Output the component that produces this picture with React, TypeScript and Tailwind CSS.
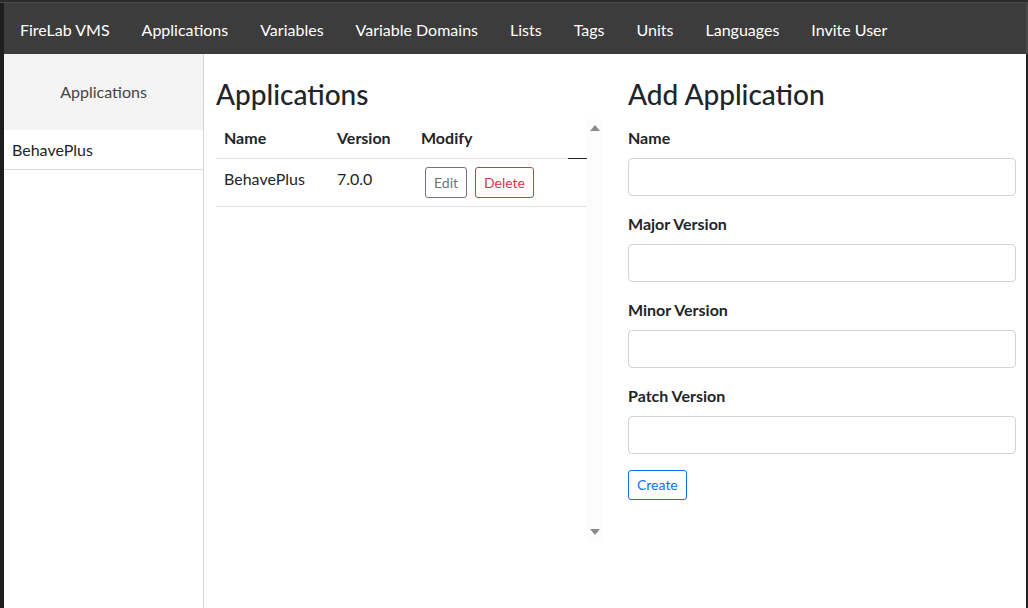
const navItems = ['Applications', 'Variables', 'Variable Domains', 'Lists', 'Tags', 'Units', 'Languages', 'Invite User']

const formFields = ['Name', 'Major Version', 'Minor Version', 'Patch Version']

function ScrollArrow({ up }: { up?: boolean }) {
  return (
    <svg width="10" height="6" viewBox="0 0 10 6" className="fill-[#8a8a8a]">
      {up ? <polygon points="5,0 10,6 0,6" /> : <polygon points="0,0 10,0 5,6" />}
    </svg>
  )
}

export default function App() {
  return (
    <div
      className="flex h-[608px] w-[1028px] flex-col overflow-hidden bg-[#1f1f1f] text-[#212529]"
      style={{ fontFamily: 'Lato, "Noto Sans", sans-serif' }}
    >
      {/* window chrome */}
      <div className="h-[3px] shrink-0 border-b border-[#4a4a4a] bg-[#2a2a2a]" />

      <div className="flex min-h-0 flex-1">
        <div className="w-[4px] shrink-0 bg-[#1e1e1e]" />

        <div className="flex min-w-0 flex-1 flex-col">
          {/* Navbar */}
          <nav className="flex h-[51px] shrink-0 items-center gap-[32px] bg-[#3c3c3c] pl-[16px] pt-[2px] text-[16px] text-white">
            <span>FireLab VMS</span>
            {navItems.map((item) => (
              <span key={item}>{item}</span>
            ))}
          </nav>

          <div className="flex min-h-0 flex-1">
            {/* Sidebar */}
            <aside className="flex w-[200px] shrink-0 flex-col border-r border-[#d6d6d6] bg-white">
              <div className="flex h-[76px] items-center justify-center bg-[#f4f4f4] text-[16px] font-normal text-[#444]">
                Applications
              </div>
              <div className="flex h-[40px] items-center border-b border-[#dcdcdc] pl-[8px] text-[16px]">
                BehavePlus
              </div>
            </aside>

            {/* Main */}
            <main className="flex min-w-0 flex-1 bg-white">
              {/* Applications list */}
              <section className="flex w-[411px] shrink-0 flex-col pl-[12px] pr-[12px] pt-[24px]">
                <h3 className="mb-[7px] text-[28px] font-medium leading-[1.2]">Applications</h3>
                <div className="flex h-[422px]">
                  <table className="h-fit w-[371px] border-collapse text-left text-[16px]">
                    <thead>
                      <tr className="h-[40px]">
                        <th className="w-[113px] border-b border-[#dee2e6] px-[8px] font-bold">Name</th>
                        <th className="w-[84px] border-b border-[#dee2e6] px-[8px] font-bold">Version</th>
                        <th className="w-[155px] border-b border-[#dee2e6] px-[8px] font-bold">Modify</th>
                        <th className="border-b border-[#212529]" />
                      </tr>
                    </thead>
                    <tbody>
                      <tr>
                        <td className="border-b border-[#dee2e6] px-[8px] pb-[8px] pt-[8px] align-top">BehavePlus</td>
                        <td className="border-b border-[#dee2e6] px-[8px] pb-[8px] pt-[8px] align-top">7.0.0</td>
                        <td className="border-b border-[#dee2e6] px-[8px] pb-[8px] pt-[8px] align-top" colSpan={2}>
                          <div className="flex gap-[8px] pl-[4px]">
                            <button className="h-[31px] rounded-[3px] border border-[#6c757d] px-[8px] text-[14px] text-[#6c757d]">
                              Edit
                            </button>
                            <button className="h-[31px] rounded-[3px] border border-[#dc3545] px-[8px] text-[14px] text-[#dc3545]">
                              Delete
                            </button>
                          </div>
                        </td>
                      </tr>
                    </tbody>
                  </table>
                  {/* scrollbar */}
                  <div className="flex w-[16px] flex-col items-center justify-between bg-[#fcfcfc] pb-[6px] pt-[6px]">
                    <ScrollArrow up />
                    <ScrollArrow />
                  </div>
                </div>
              </section>

              {/* Add form */}
              <section className="flex min-w-0 flex-1 flex-col pl-[13px] pr-[10px] pt-[24px]">
                <h3 className="mb-[14px] text-[28px] font-medium leading-[1.2]">Add Application</h3>
                {formFields.map((f) => (
                  <div key={f} className="mb-[16px] flex flex-col">
                    <label className="mb-[8px] text-[16px] font-bold leading-[24px]">{f}</label>
                    <input className="h-[38px] w-full rounded-[4px] border border-[#ced4da] bg-white px-[12px] outline-none" />
                  </div>
                ))}
                <div>
                  <button className="h-[30px] rounded-[3px] border border-[#0d6efd] px-[8px] text-[14px] text-[#0d6efd]">
                    Create
                  </button>
                </div>
              </section>
            </main>
          </div>
        </div>

        <div className="flex w-[2px] shrink-0 flex-col">
          <div className="h-[51px] bg-[#4a4a4a]" />
          <div className="flex-1 bg-[#222]" />
        </div>
      </div>
    </div>
  )
}
